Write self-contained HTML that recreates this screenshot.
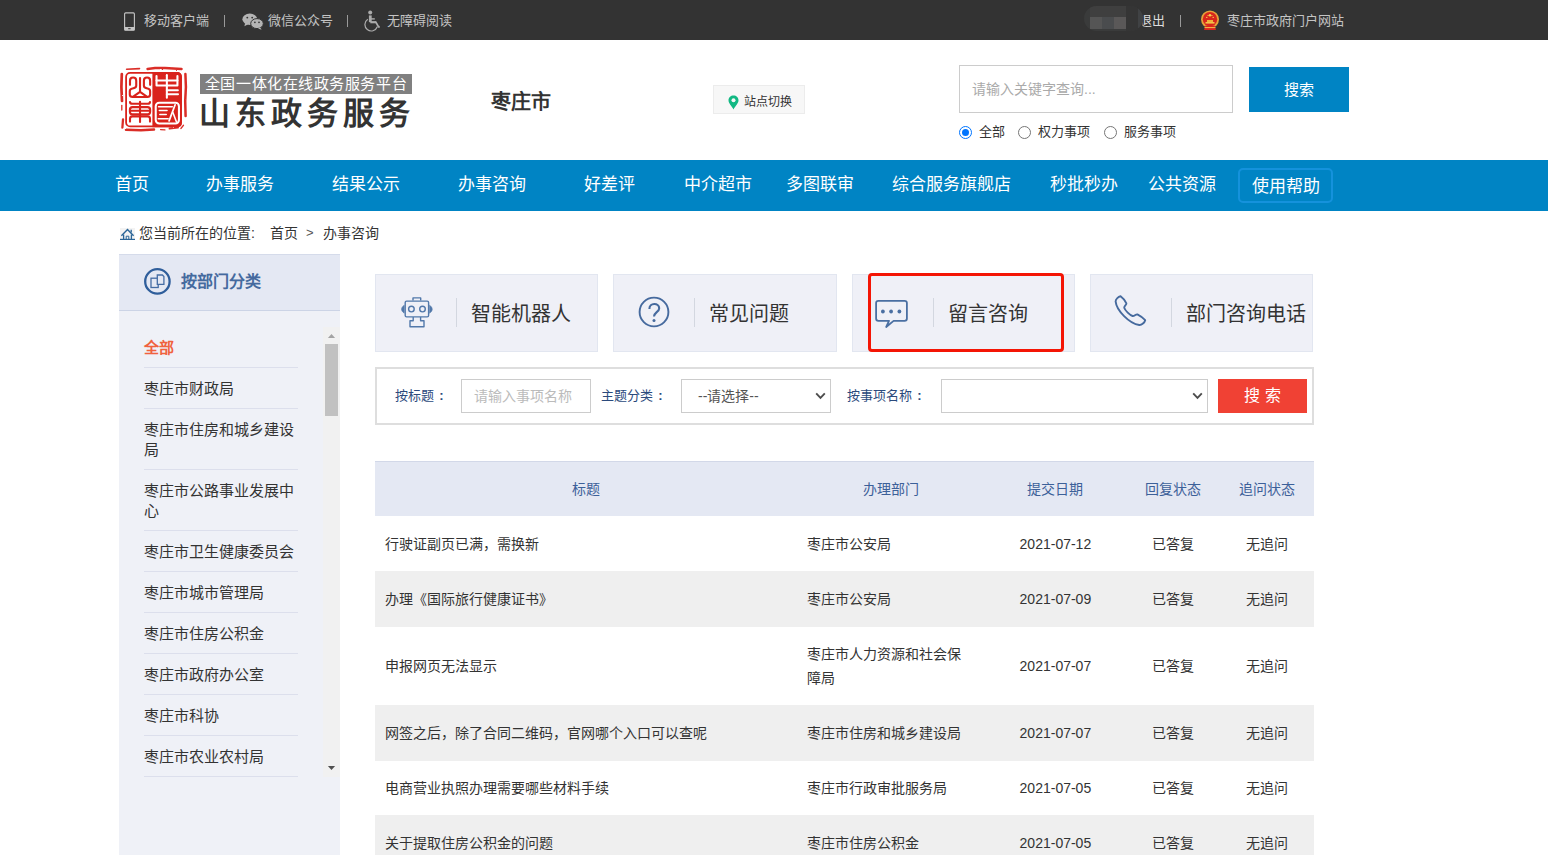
<!DOCTYPE html>
<html lang="zh-CN">
<head>
<meta charset="utf-8">
<title>办事咨询</title>
<style>
*{box-sizing:border-box;margin:0;padding:0}
html,body{width:1548px;height:855px;overflow:hidden;background:#fff}
body{font-family:"Liberation Sans",sans-serif;color:#333;position:relative;font-size:14px}
.abs{position:absolute;white-space:nowrap}
/* top bar */
#topbar{position:absolute;left:0;top:0;width:1548px;height:40px;background:#333}
#topbar .t{position:absolute;top:1px;height:40px;line-height:40px;font-size:13px;color:#c4c4c4;white-space:nowrap}
#topbar .sep{position:absolute;top:15px;width:1px;height:12px;background:#9a9a9a}
/* header */
#seal{position:absolute;left:119px;top:65px}
#tag{position:absolute;left:200px;top:74px;width:212px;height:20px;background:#808080;color:#fff;font-size:15px;line-height:20px;text-align:center;letter-spacing:.55px;white-space:nowrap}
#title{position:absolute;left:198.5px;top:94px;font-size:31px;line-height:40px;font-weight:bold;color:#333;letter-spacing:5.1px;white-space:nowrap}
#city{position:absolute;left:490.5px;top:87.5px;font-size:20px;line-height:28px;font-weight:bold;color:#333}
#site{position:absolute;left:713px;top:85px;width:92px;height:29px;background:#f7f7f7;border:1px solid #ececec;font-size:12px;line-height:27px;color:#333}
#site span{position:absolute;left:30px;top:2.5px}
#kw{position:absolute;left:959px;top:65px;width:274px;height:48px;border:1px solid #ccc;background:#fff}
#kw span{position:absolute;left:12px;top:0;line-height:46px;font-size:14px;color:#aaa}
#sbtn{position:absolute;left:1249px;top:67px;width:100px;height:45px;background:#0084c4;color:#fff;font-size:15px;line-height:45px;text-align:center}
.radio{position:absolute;top:126px;width:13px;height:13px;border:1px solid #767676;border-radius:50%;background:#fff}
.radio.on{border-color:#0075ff}
.radio.on:after{content:"";position:absolute;left:2px;top:2px;width:7px;height:7px;border-radius:50%;background:#0075ff}
.rl{position:absolute;top:122px;line-height:20px;font-size:13px;color:#333;white-space:nowrap}
/* nav */
#nav{position:absolute;left:0;top:160px;width:1548px;height:51px;background:#0084c4}
#nav a{position:absolute;top:0;height:50px;line-height:50px;font-size:17px;color:#fff;white-space:nowrap}
#help{position:absolute;left:1238px;top:8px;width:95px;height:35px;border:2px solid #1592dc;border-radius:5px}
/* breadcrumb */
#bc{position:absolute;left:139px;top:223px;font-size:14px;line-height:20px;color:#333;white-space:pre}

/* sidebar */
#side{position:absolute;left:119px;top:254px;width:221px;height:620px;background:#eff1f7}
#sh{position:absolute;left:0;top:0;width:221px;height:57px;background:#e4e8f3;border-top:1px solid #d5dbea;border-bottom:1px solid #ccd4e6}
#sh b{position:absolute;left:61.6px;top:16px;font-size:16px;line-height:22px;color:#456a9e;white-space:nowrap}
#list{position:absolute;left:25px;top:81px;width:154px}
#list div{font-size:15px;line-height:20px;padding:10.5px 0 9.5px;border-bottom:1px solid #dcdfec;color:#333}
#list div.on{color:#f0623e;font-weight:bold;padding-top:3px;padding-bottom:9px}
#track{position:absolute;left:204px;top:73px;width:17px;height:450px;background:#f1f1f1}
#thumb{position:absolute;left:206px;top:90px;width:13px;height:72px;background:#c1c1c1}
.arr{position:absolute;left:208.8px;width:0;height:0;border-left:3.7px solid transparent;border-right:3.7px solid transparent}
/* tabs */
.tab{position:absolute;top:274px;width:223px;height:78px;background:#eff0f7;border:1px solid #e2e6f0}
.tab i{position:absolute;left:80px;top:23px;width:1px;height:29px;background:#d3d7e0}
.tab span{position:absolute;left:95.3px;top:25px;font-size:20px;line-height:28px;color:#333;white-space:nowrap}
.tab svg{position:absolute}
#hl{position:absolute;left:868px;top:273px;width:196px;height:79px;border:3px solid #f41505;border-radius:4px}
/* form */
#form{position:absolute;left:375px;top:367px;width:939px;height:58px;border:2px solid #dedede;background:#fff}
#form label{position:absolute;top:16px;line-height:22px;font-size:13px;color:#2b4a7c;white-space:nowrap}
.inp{position:absolute;top:10px;height:34px;border:1px solid #ccc;background:#fff;font-size:14px;line-height:32px;white-space:nowrap}
.chev{position:absolute;right:4px;top:12px}
#fbtn{position:absolute;left:841px;top:10px;width:89px;height:34px;background:#f04134;color:#fff;font-size:16px;line-height:34px;text-align:center;white-space:pre}
/* table */
#tb{position:absolute;left:375px;top:461px;width:938.5px;border-collapse:collapse;table-layout:fixed}
#tb th{height:55px;padding-bottom:1px;box-shadow:inset 0 1px 0 #d2d8e8;background:#e4e8f3;color:#3c6099;font-weight:normal;font-size:14px;text-align:center}
#tb td{height:55px;font-size:14px;line-height:24px;color:#333;text-align:center;padding:0}
#tb td.l{text-align:left;padding-left:10px;padding-right:10px}
#tb tr.s td{height:54px}
#tb tr.g td{background:#efefef;height:56px}
</style>
</head>
<body>
<div id="topbar">
  <svg class="abs" style="left:123px;top:11px" width="13" height="20" viewBox="0 0 13 20"><rect x="1.6" y="1.9" width="9.8" height="17.4" rx="1" fill="none" stroke="#c4c4c4" stroke-width="1.1"/><rect x="1.6" y="16" width="9.8" height="3.3" fill="#c4c4c4"/><rect x="5.2" y="17.2" width="2.4" height="1" fill="#333"/></svg>
  <span class="t" style="left:144px">移动客户端</span>
  <i class="sep" style="left:224px"></i>
  <svg class="abs" style="left:242px;top:12px" width="22" height="18" viewBox="0 0 22 18"><ellipse cx="7.8" cy="7.2" rx="7.4" ry="5.7" fill="#b4b4b4"/><path d="M3.2 11 L2.4 14.2 L6.2 12.2Z" fill="#b4b4b4"/><ellipse cx="15" cy="11.6" rx="6.3" ry="5" fill="#b4b4b4" stroke="#333" stroke-width="1"/><path d="M18.3 15.6 L19.6 17.8 L16 16.4Z" fill="#b4b4b4"/><circle cx="5.3" cy="5.6" r=".95" fill="#333"/><circle cx="10.2" cy="5.6" r=".95" fill="#333"/><circle cx="12.9" cy="10.3" r=".85" fill="#333"/><circle cx="17" cy="10.3" r=".85" fill="#333"/></svg>
  <span class="t" style="left:268px">微信公众号</span>
  <i class="sep" style="left:347px"></i>
  <svg class="abs" style="left:364px;top:10px" width="17" height="22" viewBox="0 0 17 22" fill="none" stroke="#ababab"><circle cx="6.2" cy="2.5" r="2" fill="#ababab" stroke="none"/><path d="M6.3,5.4 V12.2" stroke-width="2.8"/><path d="M6.3,8.9 H10.8" stroke-width="1.4"/><path d="M6.3,12.2 H12" stroke-width="2.2"/><path d="M11.6,11.6 L14.6,17 L15.8,16.6" stroke-width="1.7" stroke-linejoin="round"/><path d="M3.8,9.2 A6.4,6.4 0 1 0 13.3,16.8" stroke-width="1.2"/></svg>
  <span class="t" style="left:387px">无障碍阅读</span>
  <div class="abs" style="left:1084px;top:6px;width:59px;height:25px;border-radius:12.5px;background:#3a3b3b;overflow:hidden;z-index:3"><i style="position:absolute;left:6px;top:0;width:36px;height:11px;background:#3f3f3f"></i><i style="position:absolute;left:6px;top:11px;width:12px;height:12px;background:#555"></i><i style="position:absolute;left:18px;top:11px;width:12px;height:12px;background:#4a4c4e"></i><i style="position:absolute;left:30px;top:11px;width:12px;height:12px;background:#5a5858"></i><i style="position:absolute;left:42px;top:0;width:12px;height:25px;background:#353535"></i><i style="position:absolute;left:54px;top:0;width:5px;height:25px;background:#404244"></i></div>
  <span class="t" style="left:1139px;color:#ddd;clip-path:inset(0 0 0 3.5px)">退出</span>
  <i class="sep" style="left:1180px"></i>
  <svg class="abs" style="left:1200px;top:10px" width="20" height="21" viewBox="0 0 20 21"><circle cx="10" cy="9.4" r="9" fill="#e8a23a"/><circle cx="10" cy="9.2" r="7.2" fill="#d8261c"/><path d="M5.5 15.5 H14.5 L16 20 H4Z" fill="#d8261c"/><path d="M4.5 17.6 H15.5" stroke="#f3c24a" stroke-width="1"/><path d="M5.5 12 H14.5 V13.6 H5.5Z" fill="#f3c24a"/><path d="M7 10 H13 V12 H7Z" fill="#f0b23a"/><circle cx="10" cy="5.2" r="1.3" fill="#f7d14a"/><circle cx="6.8" cy="7.4" r=".7" fill="#f7d14a"/><circle cx="13.2" cy="7.4" r=".7" fill="#f7d14a"/><circle cx="8" cy="5.6" r=".6" fill="#f7d14a"/><circle cx="12" cy="5.6" r=".6" fill="#f7d14a"/></svg>
  <span class="t" style="left:1227px">枣庄市政府门户网站</span>
</div>

<!-- header -->
<svg id="seal" width="70" height="68" viewBox="0 0 70 68">
<defs><filter id="rg" x="-10%" y="-10%" width="120%" height="120%"><feTurbulence type="fractalNoise" baseFrequency="0.9" numOctaves="2" seed="7" result="n"/><feDisplacementMap in="SourceGraphic" in2="n" scale="1.7"/></filter></defs>
<g fill="none" stroke="#d9231c" stroke-linecap="round" filter="url(#rg)" opacity=".95">
  <path d="M7.6,4.2 L20.5,3.6" stroke-width="1.6"/><path d="M28.5,3.9 L36,2.9 L46,3.1 L62.5,4" stroke-width="2.5"/>
  <path d="M2.8,9 L2.4,22 L3,36" stroke-width="2.7"/><path d="M2.8,40.5 L2.8,45" stroke-width="1.3"/><path d="M4,54.5 L3.4,62.5" stroke-width="2.3"/>
  <path d="M66.4,9 L66.9,22 L66.2,36 L66.6,51" stroke-width="2.5"/><path d="M64.4,60.4 L62,63.4" stroke-width="1.5"/>
  <path d="M7,64.8 L22,65.3 L35,64.6" stroke-width="2.5"/><path d="M41.5,64.6 L46,64.9" stroke-width="1.1"/><path d="M50.6,63.6 L59,62.6" stroke-width="2"/>
</g>
<rect x="7.1" y="7.9" width="54.9" height="53.5" rx="4" fill="#fff" stroke="#d9231c" stroke-width="1.8"/>
<path d="M34.3,7.9 H58 Q62,7.9 62,11.9 V57.4 Q62,61.4 58,61.4 H34.3 Z" fill="#d9231c" stroke="#d9231c" stroke-width="1.8"/>
<g transform="translate(3,3) scale(0.042105)" fill="none" stroke="#d9231c" stroke-width="50" stroke-linecap="round" stroke-linejoin="round">
  <path d="M190,400 V300 C190,200 338,200 338,300 V420 C338,468 290,480 250,485 C200,492 185,512 185,552 V630 C185,670 215,690 255,690 H600 C640,690 668,670 668,630 V552 C668,512 652,492 606,485 C566,480 520,468 520,420 V300 C520,200 668,200 668,300 V400"/>
  <path d="M428,238 V565 L258,688 M428,565 L598,688"/>
</g>
<g transform="translate(3,33) scale(0.042105)" fill="none" stroke="#d9231c" stroke-width="50" stroke-linecap="round" stroke-linejoin="round">
  <path d="M190,95 C190,125 215,138 250,138 H605 C640,138 665,125 665,95"/>
  <path d="M428,92 V568"/>
  <rect x="188" y="216" width="480" height="172" rx="62"/><path d="M192,302 H664"/>
  <path d="M190,560 V492 C190,455 215,436 252,436 H603 C640,436 665,455 665,492 V560"/>
</g>
<g transform="translate(31,1) scale(0.079523)" fill="none" stroke="#fff" stroke-width="26" stroke-linecap="round" stroke-linejoin="round">
  <path d="M82,125 V245 H345 V125"/><path d="M82,182 H345"/><path d="M212,115 V400"/><path d="M212,305 H350"/><path d="M212,356 H352"/>
  <rect x="72" y="462" width="292" height="262" rx="44"/>
  <path d="M108,512 H280" stroke-width="20"/><path d="M118,560 H214" stroke-width="20"/><path d="M124,610 H204" stroke-width="20"/><path d="M104,664 H228" stroke-width="20"/>
  <path d="M316,488 L240,690" stroke-width="22"/><path d="M288,585 L332,700" stroke-width="20"/>
</g>
</svg>
<div id="tag">全国一体化在线政务服务平台</div>
<div id="title">山东政务服务</div>
<div id="city">枣庄市</div>
<div id="site"><svg style="position:absolute;left:13.6px;top:9px" width="11" height="15" viewBox="0 0 11 15"><path d="M5.5 0.5 C2.6 .5 .5 2.6 .5 5.3 C.5 8.4 3.6 11 5.5 14.4 C7.4 11 10.5 8.4 10.5 5.3 C10.5 2.6 8.4 .5 5.5 .5Z" fill="#12b883"/><circle cx="5.5" cy="5.2" r="2" fill="#f7f7f7"/></svg><span>站点切换</span></div>
<div id="kw"><span>请输入关键字查询...</span></div>
<div id="sbtn">搜索</div>
<i class="radio on" style="left:959px"></i><span class="rl" style="left:979px">全部</span>
<i class="radio" style="left:1018px"></i><span class="rl" style="left:1038px">权力事项</span>
<i class="radio" style="left:1104px"></i><span class="rl" style="left:1124px">服务事项</span>

<!-- nav -->
<div id="nav">
  <a style="left:115px">首页</a>
  <a style="left:206px">办事服务</a>
  <a style="left:332px">结果公示</a>
  <a style="left:458px">办事咨询</a>
  <a style="left:584px">好差评</a>
  <a style="left:684px">中介超市</a>
  <a style="left:786px">多图联审</a>
  <a style="left:892px">综合服务旗舰店</a>
  <a style="left:1050px">秒批秒办</a>
  <a style="left:1148px">公共资源</a>
  <div id="help"></div>
  <a style="left:1252px;top:2px">使用帮助</a>
</div>

<!-- breadcrumb -->
<svg class="abs" style="left:120px;top:227px" width="15" height="13" viewBox="0 0 15 13" fill="none" stroke="#2a6496"><rect x="0" y="1" width="15" height="11" fill="#f3f3f3" stroke="none"/><path d="M1.4,8.7 L7.5,2.6 L13.6,8.7" stroke-width="1.4"/><path d="M3.6,7.4 V12 M11.4,7.4 V12" stroke-width="1.3"/><path d="M11.2,2.8 V5.6" stroke-width="1.3"/><path d="M6.2,12 V9.2 H8.8 V12" stroke-width="1"/><path d="M0,12.4 H15" stroke-width="1.2"/></svg>
<div id="bc">您当前所在的位置:</div>
<div class="abs" style="left:270px;top:223px;line-height:20px;font-size:14px">首页</div>
<div class="abs" style="left:306px;top:223px;line-height:20px;font-size:13px;color:#555">&gt;</div>
<div class="abs" style="left:323px;top:223px;line-height:20px;font-size:14px">办事咨询</div>


<div id="side">
  <div id="sh">
    <svg style="position:absolute;left:24px;top:13px" width="28" height="28" viewBox="0 0 28 28"><circle cx="14.4" cy="13.4" r="12.2" fill="none" stroke="#2f5e9b" stroke-width="2.3"/><rect x="8" y="10.2" width="7.2" height="9.3" fill="none" stroke="#446ca4" stroke-width="1.3"/><path d="M14.3,7 H19.4 L20.9,8.6 V16.3 H14.3 Z" fill="#e4e8f3" stroke="#446ca4" stroke-width="1.3"/></svg>
    <b>按部门分类</b>
  </div>
  <div id="list">
    <div class="on">全部</div>
    <div>枣庄市财政局</div>
    <div>枣庄市住房和城乡建设局</div>
    <div>枣庄市公路事业发展中心</div>
    <div>枣庄市卫生健康委员会</div>
    <div>枣庄市城市管理局</div>
    <div>枣庄市住房公积金</div>
    <div>枣庄市政府办公室</div>
    <div>枣庄市科协</div>
    <div>枣庄市农业农村局</div>
  </div>
  <i id="track"></i><svg style="position:absolute;left:208px;top:79px" width="9" height="6" viewBox="0 0 9 6"><polygon points="0.9,5 8.1,5 4.5,1" fill="#a3a3a3"/></svg>
  <i id="thumb"></i>
  <svg style="position:absolute;left:208px;top:511px" width="9" height="6" viewBox="0 0 9 6"><polygon points="0.9,1 8.1,1 4.5,5" fill="#505050"/></svg>
</div>

<div class="tab" style="left:375px"><svg style="left:24px;top:20px" width="34" height="34" viewBox="400 295 34 34" fill="none" stroke="#5278aa" stroke-width="1.4" stroke-linejoin="round"><path d="M413,300.4 V297.9 H420.7 V300.4"/><rect x="405.2" y="301.1" width="23.4" height="15.8" rx="1.4"/><circle cx="411.4" cy="309.1" r="2.8"/><circle cx="422.5" cy="309.1" r="2.8"/><path d="M404.2,305.2 C402.6,306.4 401.6,307.6 401.6,309.2 C401.6,310.8 402.6,312 404.2,313.2 Z" fill="#5278aa" stroke-width=".6"/><path d="M429.6,305.2 C431.2,306.4 432.2,307.6 432.2,309.2 C432.2,310.8 431.2,312 429.6,313.2 Z" fill="#5278aa" stroke-width=".6"/><path d="M413.2,317 V320.8 H410 V326.8 H424 V320.8 H420.6 V317"/></svg><i></i><span>智能机器人</span></div>
<div class="tab" style="left:613px;width:224px"><svg style="left:23px;top:20px" width="34" height="34" viewBox="636.6 295 34 34" fill="none" stroke="#466a9e" stroke-width="1.9" stroke-linecap="round"><circle cx="653.6" cy="312" r="14.4"/><path d="M649,309 C648.8,302.6 658.8,302.4 658.8,308.2 C658.8,312 653.6,312.4 653.6,316.6" stroke-width="2.1" stroke-linecap="butt"/><circle cx="653.6" cy="320.4" r="1.5" fill="#466a9e" stroke="none"/></svg><i></i><span>常见问题</span></div>
<div class="tab" style="left:852px"><svg style="left:20px;top:22px" width="38" height="32" viewBox="873 297 38 32" fill="none" stroke="#4a6fa2" stroke-width="1.8" stroke-linejoin="round"><path d="M878.4,300.8 H904.6 Q906.9,300.8 906.9,303.1 V318.6 Q906.9,320.9 904.6,320.9 H893.6 L886.2,327 L889,320.9 H878.4 Q876.1,320.9 876.1,318.6 V303.1 Q876.1,300.8 878.4,300.8 Z"/><g fill="#4a6fa2" stroke="none"><circle cx="882.9" cy="311.5" r="1.9"/><circle cx="891.1" cy="311.5" r="1.9"/><circle cx="899.4" cy="311.5" r="1.9"/></g></svg><i></i><span>留言咨询</span></div>
<div class="tab" style="left:1090px"><svg style="left:21px;top:18px" width="36" height="36" viewBox="1112 294 36 36" fill="none" stroke="#466a9e" stroke-width="1.9" stroke-linejoin="round"><path d="M1120.6,297.2 C1118.5,297.8 1115.6,300 1115.6,302.4 C1116.5,311.5 1129.5,324.8 1139.2,326 C1141.8,326.2 1144.6,323.6 1145.2,321.2 C1143,319 1139.8,316.6 1137.4,315.4 C1135.4,315.2 1134.4,317.4 1132.6,317 C1129.8,316.2 1125.2,311.6 1124.2,308.8 C1124,307 1126.6,306 1126.4,304.4 C1125.2,301.8 1122.8,298.8 1120.6,297.2 Z"/></svg><i></i><span>部门咨询电话</span></div>
<div id="hl"></div>

<div id="form">
  <label style="left:18px">按标题<span style="display:inline-block;width:13px;text-align:center;padding-left:2px;font-weight:bold">:</span></label>
  <div class="inp" style="left:84px;width:130px;color:#bbb;padding-left:12px">请输入事项名称</div>
  <label style="left:224px">主题分类<span style="display:inline-block;width:13px;text-align:center;padding-left:2px;font-weight:bold">:</span></label>
  <div class="inp" style="left:304px;width:150px;color:#555;padding-left:16px;font-size:14px">--请选择--<svg class="chev" width="11" height="8" viewBox="0 0 11 8"><path d="M1.2 1.4 L5.5 5.8 L9.8 1.4" fill="none" stroke="#4d4d4d" stroke-width="1.9"/></svg></div>
  <label style="left:470px">按事项名称<span style="display:inline-block;width:13px;text-align:center;padding-left:2px;font-weight:bold">:</span></label>
  <div class="inp" style="left:564px;width:267px"><svg class="chev" width="11" height="8" viewBox="0 0 11 8"><path d="M1.2 1.4 L5.5 5.8 L9.8 1.4" fill="none" stroke="#4d4d4d" stroke-width="1.9"/></svg></div>
  <div id="fbtn">搜 索</div>
</div>

<table id="tb">
<colgroup><col style="width:45%"><col style="width:20%"><col style="width:15%"><col style="width:10%"><col style="width:10%"></colgroup>
<tr><th>标题</th><th>办理部门</th><th>提交日期</th><th>回复状态</th><th>追问状态</th></tr>
<tr><td class="l">行驶证副页已满，需换新</td><td class="l">枣庄市公安局</td><td>2021-07-12</td><td>已答复</td><td>无追问</td></tr>
<tr class="g"><td class="l">办理《国际旅行健康证书》</td><td class="l">枣庄市公安局</td><td>2021-07-09</td><td>已答复</td><td>无追问</td></tr>
<tr><td class="l">申报网页无法显示</td><td class="l" style="height:78px">枣庄市人力资源和社会保障局</td><td>2021-07-07</td><td>已答复</td><td>无追问</td></tr>
<tr class="g"><td class="l">网签之后，除了合同二维码，官网哪个入口可以查呢</td><td class="l">枣庄市住房和城乡建设局</td><td>2021-07-07</td><td>已答复</td><td>无追问</td></tr>
<tr class="s"><td class="l">电商营业执照办理需要哪些材料手续</td><td class="l">枣庄市行政审批服务局</td><td>2021-07-05</td><td>已答复</td><td>无追问</td></tr>
<tr class="g"><td class="l">关于提取住房公积金的问题</td><td class="l">枣庄市住房公积金</td><td>2021-07-05</td><td>已答复</td><td>无追问</td></tr>
</table>

</body>
</html>
